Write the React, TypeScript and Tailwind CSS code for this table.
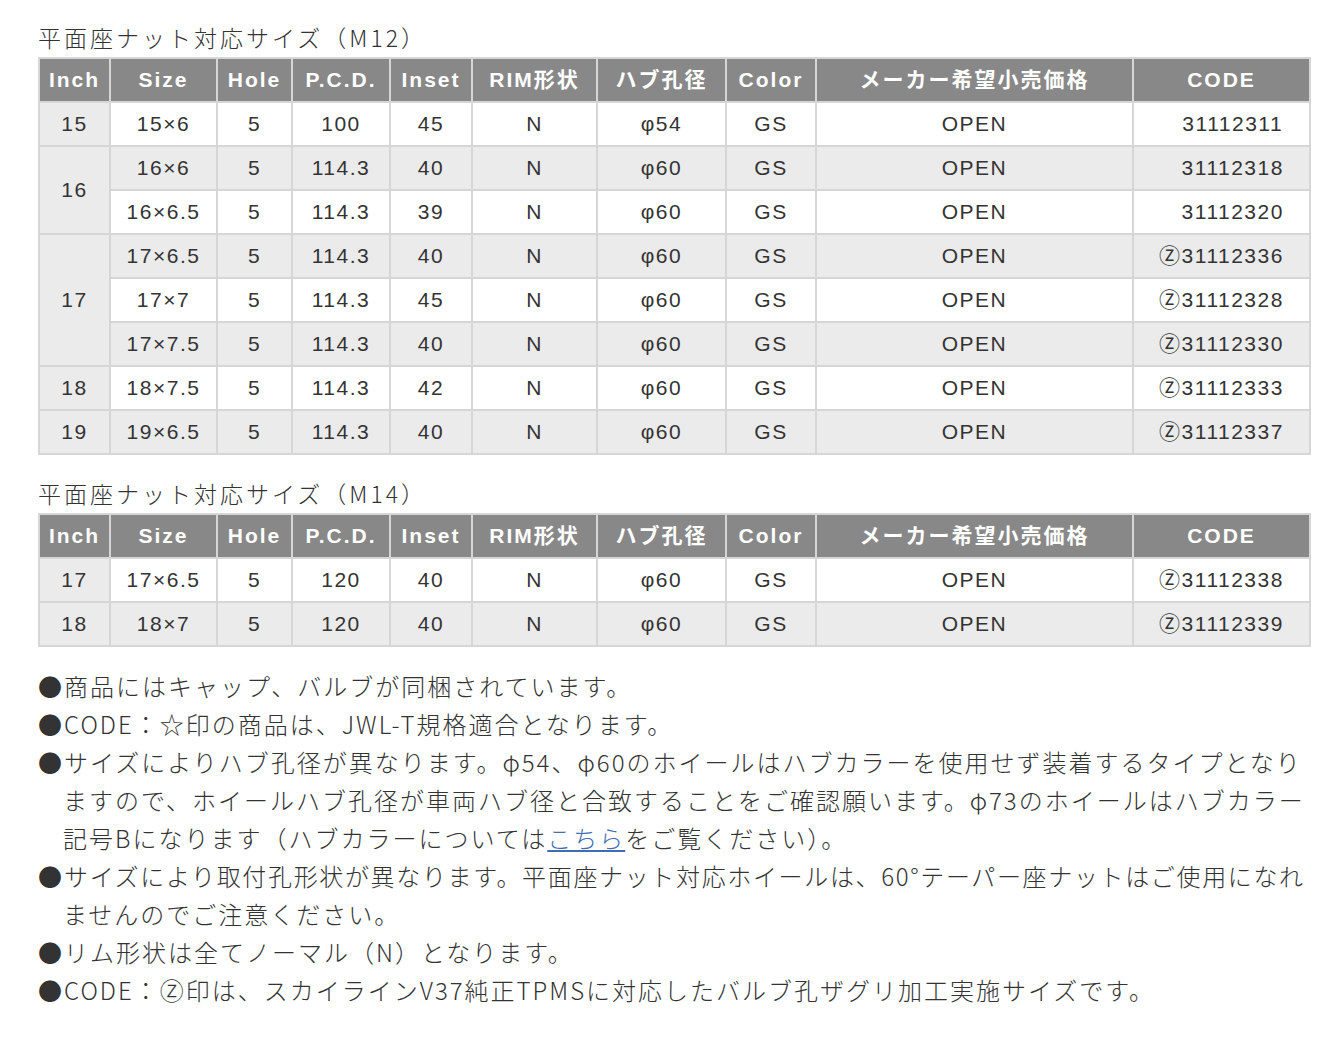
import React from "react"

type Row = {
	size: string
	hole: string
	pcd: string
	inset: string
	hub: string
	code: string
}

type Group = { inch: string; rows: Row[] }

// codes without the Ⓩ mark keep a blank lead so the digits line up
const m12: Group[] = [
	{ inch: "15", rows: [{ size: "15×6", hole: "5", pcd: "100", inset: "45", hub: "φ54", code: "　31112311" }] },
	{
		inch: "16",
		rows: [
			{ size: "16×6", hole: "5", pcd: "114.3", inset: "40", hub: "φ60", code: "　31112318" },
			{ size: "16×6.5", hole: "5", pcd: "114.3", inset: "39", hub: "φ60", code: "　31112320" },
		],
	},
	{
		inch: "17",
		rows: [
			{ size: "17×6.5", hole: "5", pcd: "114.3", inset: "40", hub: "φ60", code: "Ⓩ31112336" },
			{ size: "17×7", hole: "5", pcd: "114.3", inset: "45", hub: "φ60", code: "Ⓩ31112328" },
			{ size: "17×7.5", hole: "5", pcd: "114.3", inset: "40", hub: "φ60", code: "Ⓩ31112330" },
		],
	},
	{ inch: "18", rows: [{ size: "18×7.5", hole: "5", pcd: "114.3", inset: "42", hub: "φ60", code: "Ⓩ31112333" }] },
	{ inch: "19", rows: [{ size: "19×6.5", hole: "5", pcd: "114.3", inset: "40", hub: "φ60", code: "Ⓩ31112337" }] },
]

const m14: Group[] = [
	{ inch: "17", rows: [{ size: "17×6.5", hole: "5", pcd: "120", inset: "40", hub: "φ60", code: "Ⓩ31112338" }] },
	{ inch: "18", rows: [{ size: "18×7", hole: "5", pcd: "120", inset: "40", hub: "φ60", code: "Ⓩ31112339" }] },
]

const headers = ["Inch", "Size", "Hole", "P.C.D.", "Inset", "RIM形状", "ハブ孔径", "Color", "メーカー希望小売価格", "CODE"]
const widths = [71, 107, 75, 98, 82, 125, 129, 90, 317, 177]

const cell = "border-2 border-[#d6d6d6] h-[44px] p-0 text-center align-middle"

function SizeTable({ groups }: { groups: Group[] }) {
	let index = 0
	return (
		<table className="w-[1272px] table-fixed border-collapse border-2 border-[#d6d6d6] text-[21px] tracking-[1.5px] text-[#333]">
			<colgroup>
				{widths.map((w, i) => (
					<col key={i} style={{ width: w }} />
				))}
			</colgroup>
			<thead>
				<tr>
					{headers.map((h) => (
						<th key={h} className={`${cell} bg-[#888888] font-bold text-white tracking-[2px]`}>
							{h}
						</th>
					))}
				</tr>
			</thead>
			<tbody>
				{groups.map((g) =>
					g.rows.map((r, i) => {
						const bg = index++ % 2 === 0 ? "bg-white" : "bg-[#ebebeb]"
						return (
							<tr key={g.inch + r.size} className={bg}>
								{i === 0 && (
									<td rowSpan={g.rows.length} className={`${cell} bg-[#ebebeb]`}>
										{g.inch}
									</td>
								)}
								<td className={cell}>{r.size}</td>
								<td className={cell}>{r.hole}</td>
								<td className={cell}>{r.pcd}</td>
								<td className={cell}>{r.inset}</td>
								<td className={cell}>N</td>
								<td className={cell}>{r.hub}</td>
								<td className={cell}>GS</td>
								<td className={cell}>OPEN</td>
								<td className={`${cell} whitespace-pre`}>{r.code}</td>
							</tr>
						)
					})
				)}
			</tbody>
		</table>
	)
}

// each note is given as its visual lines so the breaks match
function Note({ lines }: { lines: React.ReactNode[] }) {
	return (
		<div>
			{lines.map((l, i) => (
				<p key={i} className={`whitespace-nowrap ${i === 0 ? "" : "pl-[25px]"}`}>
					{i === 0 && "●"}
					{l}
				</p>
			))}
		</div>
	)
}

export default function App() {
	return (
		<div className="min-h-screen bg-white pt-[21px] pb-10 [font-family:'Liberation_Sans','Noto_Sans_CJK_JP',sans-serif]">
			<div className="ml-[38px] w-[1272px]">
				<h2 className="text-[23px] leading-[33px] tracking-[3px] text-[#333] font-light mb-[3px] [font-family:'Noto_Sans_CJK_JP',sans-serif]">
					平面座ナット対応サイズ（M12）
				</h2>
				<SizeTable groups={m12} />

				<h2 className="mt-[22px] text-[23px] leading-[33px] tracking-[3px] text-[#333] font-light mb-[3px] [font-family:'Noto_Sans_CJK_JP',sans-serif]">
					平面座ナット対応サイズ（M14）
				</h2>
				<SizeTable groups={m14} />

				<div className="mt-[20px] text-[24px] leading-[38px] tracking-[2px] text-[#333] font-light [font-family:'Noto_Sans_CJK_JP',sans-serif]">
					<Note lines={["商品にはキャップ、バルブが同梱されています。"]} />
					<Note lines={["CODE：☆印の商品は、JWL-T規格適合となります。"]} />
					<Note
						lines={[
							"サイズによりハブ孔径が異なります。φ54、φ60のホイールはハブカラーを使用せず装着するタイプとなり",
							"ますので、ホイールハブ孔径が車両ハブ径と合致することをご確認願います。φ73のホイールはハブカラー",
							<>
								記号Bになります（ハブカラーについては
								<a href="#" className="text-[#3f6db5] underline underline-offset-2">
									こちら
								</a>
								をご覧ください）。
							</>,
						]}
					/>
					<Note
						lines={[
							<span className="tracking-[1.65px]">
								サイズにより取付孔形状が異なります。平面座ナット対応ホイールは、60°テーパー座ナットはご使用になれ
							</span>,
							"ませんのでご注意ください。",
						]}
					/>
					<Note lines={["リム形状は全てノーマル（N）となります。"]} />
					<Note lines={["CODE：Ⓩ印は、スカイラインV37純正TPMSに対応したバルブ孔ザグリ加工実施サイズです。"]} />
				</div>
			</div>
		</div>
	)
}
